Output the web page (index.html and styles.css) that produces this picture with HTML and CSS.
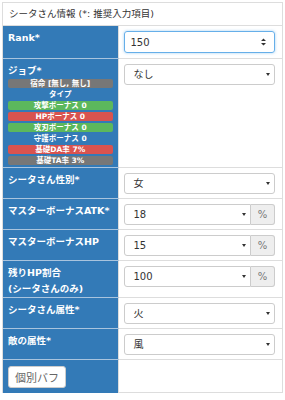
FILE: index.html
```html
<!DOCTYPE html>
<html lang="ja">
<head>
    <meta charset="UTF-8">
    <meta name="viewport" content="width=device-width, initial-scale=1.0">
    <title>シータさん情報</title>
    <link rel="stylesheet" href="styles.css">
</head>
<body>

    <div class="panel">
        <div class="panel-heading">シータさん情報 (*: 推奨入力項目)</div>

        <table class="info-table">
            <tr class="row-rank">
                <th>Rank*</th>
                <td>
                    <div class="number-input">
                        <span>150</span>
                        <span class="spinner">
                            <svg width="5" height="8" viewBox="0 0 5 8"><path d="M0 3 L2.5 0.5 L5 3 Z M0 5 L2.5 7.5 L5 5 Z" fill="#333"/></svg>
                        </span>
                    </div>
                </td>
            </tr>
            <tr>
                <th>
                    <div class="job-title">ジョブ*</div>
                    <div class="badge grey">宿命 [無し, 無し]</div>
                    <div class="badge plain">タイプ</div>
                    <div class="badge green">攻撃ボーナス 0</div>
                    <div class="badge red">HPボーナス 0</div>
                    <div class="badge green">攻刃ボーナス 0</div>
                    <div class="badge plain">守護ボーナス 0</div>
                    <div class="badge red">基礎DA率 7%</div>
                    <div class="badge grey">基礎TA率 3%</div>
                </th>
                <td>
                    <div class="select">なし</div>
                </td>
            </tr>
            <tr>
                <th>シータさん性別*</th>
                <td><div class="select">女</div></td>
            </tr>
            <tr>
                <th>マスターボーナスATK*</th>
                <td>
                    <div class="input-group">
                        <div class="select">18</div>
                        <span class="addon">%</span>
                    </div>
                </td>
            </tr>
            <tr>
                <th>マスターボーナスHP</th>
                <td>
                    <div class="input-group">
                        <div class="select">15</div>
                        <span class="addon">%</span>
                    </div>
                </td>
            </tr>
            <tr>
                <th>残りHP割合<br>(シータさんのみ)</th>
                <td>
                    <div class="input-group">
                        <div class="select">100</div>
                        <span class="addon">%</span>
                    </div>
                </td>
            </tr>
            <tr>
                <th>シータさん属性*</th>
                <td><div class="select">火</div></td>
            </tr>
            <tr>
                <th>敵の属性*</th>
                <td><div class="select">風</div></td>
            </tr>
            <tr class="row-button">
                <th><button class="btn">個別バフ</button></th>
                <td></td>
            </tr>
        </table>
    </div>

</body>
</html>
```

FILE: styles.css
```css
body {
    margin: 0;
    font-family: "DejaVu Sans", "Noto Sans CJK JP", sans-serif;
    font-size: 10px;
    color: #333;
    background-color: #fff;
}

.panel {
    margin: 2px 2px 0 2px;
    border: 1px solid #ddd;
    border-bottom: none;
}

.panel-heading {
    height: 22px;
    line-height: 22px;
    padding: 0 6px;
    font-size: 9.5px;
    border-bottom: 1px solid #ddd;
}

.info-table {
    width: 100%;
    border-collapse: collapse;
}

.info-table th {
    width: 115px;
    box-sizing: border-box;
    background-color: #337ab7;
    color: #fff;
    text-align: left;
    vertical-align: top;
    padding: 4px 5px 0 5px;
    font-size: 9.5px;
    font-weight: bold;
    line-height: 16px;
    border-bottom: 1px solid #a9c4de;
    border-right: 1px solid #ddd;
}

.info-table td {
    vertical-align: top;
    padding: 5px 7px 4px 5px;
    border-bottom: 1px solid #ddd;
}

.row-rank th {
    height: 32px;
}

.row-rank td {
    padding-top: 5px;
}

.badge {
    height: 9px;
    line-height: 9px;
    margin-bottom: 2px;
    border-radius: 2px;
    text-align: center;
    font-size: 7.5px;
    font-weight: bold;
    color: #fff;
}

.badge.grey {
    background-color: #777;
}

.badge.green {
    background-color: #5cb85c;
}

.badge.red {
    background-color: #d9534f;
}

.badge.plain {
    background-color: transparent;
}

.number-input {
    display: flex;
    align-items: center;
    justify-content: space-between;
    height: 22px;
    box-sizing: border-box;
    padding: 0 8px 0 6px;
    border: 1px solid #66afe9;
    border-radius: 3px;
    box-shadow: 0 0 3px rgba(102, 175, 233, 0.6);
    font-size: 10px;
}

.spinner {
    display: flex;
}

.select {
    flex: 1;
    position: relative;
    height: 21px;
    line-height: 19px;
    box-sizing: border-box;
    padding: 0 9px;
    border: 1px solid #ccc;
    border-radius: 3px;
    font-size: 10px;
    color: #333;
}

.select::after {
    content: "";
    position: absolute;
    right: 4px;
    top: 8px;
    border-left: 2px solid transparent;
    border-right: 2px solid transparent;
    border-top: 3px solid #333;
}

.input-group {
    display: flex;
}

.input-group .select {
    border-radius: 3px 0 0 3px;
}

.addon {
    width: 24px;
    height: 21px;
    line-height: 19px;
    box-sizing: border-box;
    text-align: center;
    background-color: #eee;
    border: 1px solid #ccc;
    border-left: none;
    border-radius: 0 3px 3px 0;
    color: #777;
    font-size: 10px;
}

.row-button th {
    padding: 6px 5px 5px 5px;
    border-bottom: none;
}

.row-button td {
    border-bottom: 1px solid #ddd;
}

.btn {
    display: block;
    height: 22px;
    padding: 0 6px;
    background-color: #fff;
    border: 1px solid #ccc;
    border-radius: 3px;
    font-family: "Noto Sans CJK JP", sans-serif;
    font-size: 11px;
    color: #666;
}
```
